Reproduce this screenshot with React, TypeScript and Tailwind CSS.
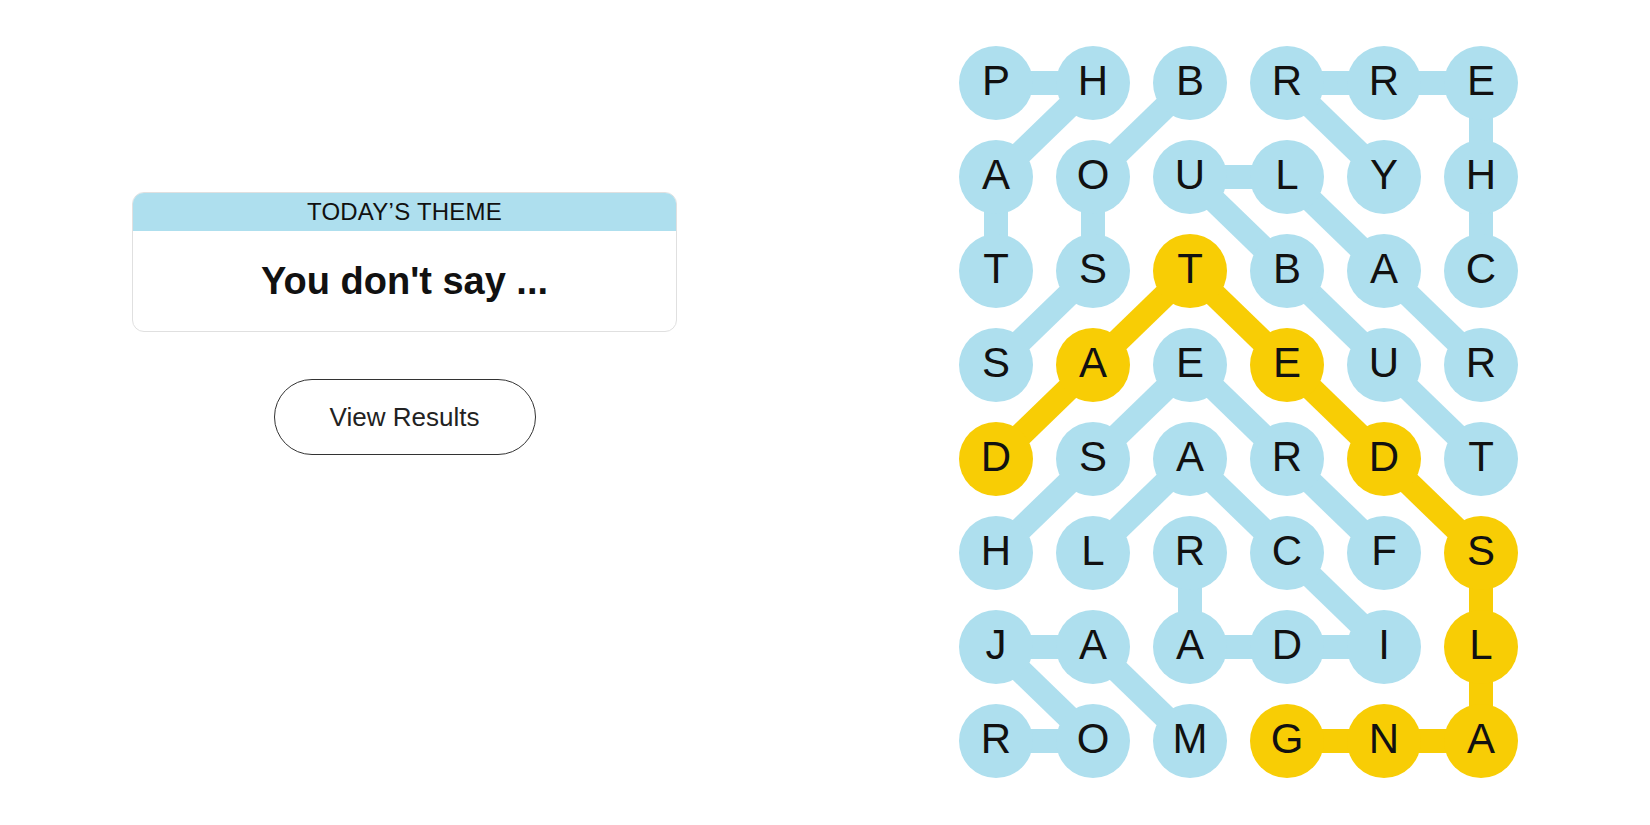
import React from "react";

const LETTERS = ["PHBRRE", "AOULYH", "TSTBAC", "SAEEUR", "DSARDT", "HLRCFS", "JAADIL", "ROMGNA"];

type P = [number, number];

const WORDS: { path: P[]; span?: boolean }[] = [
  { path: [[0, 0], [0, 1], [1, 0], [2, 0]] }, // PHAT
  { path: [[0, 2], [1, 1], [2, 1], [3, 0]] }, // BOSS
  { path: [[2, 5], [1, 5], [0, 5], [0, 4], [0, 3], [1, 4]] }, // CHERRY
  { path: [[4, 5], [3, 4], [2, 3], [1, 2], [1, 3], [2, 4], [3, 5]] }, // TUBULAR
  { path: [[5, 4], [4, 3], [3, 2], [4, 1], [5, 0]] }, // FRESH
  { path: [[5, 2], [6, 2], [6, 3], [6, 4], [5, 3], [4, 2], [5, 1]] }, // RADICAL
  { path: [[7, 2], [6, 1], [6, 0], [7, 1], [7, 0]] }, // MAJOR
  {
    path: [[4, 0], [3, 1], [2, 2], [3, 3], [4, 4], [5, 5], [6, 5], [7, 5], [7, 4], [7, 3]],
    span: true,
  }, // DATEDSLANG
];

const BLUE = "#aedfee";
const YELLOW = "#f8cd05";
const CELL = 74;
const GX = 97;
const GY = 94;

const spanSet = new Set<string>();
WORDS.filter((w) => w.span).forEach((w) => w.path.forEach(([r, c]) => spanSet.add(`${r}-${c}`)));

const cx = (c: number) => CELL / 2 + c * GX;
const cy = (r: number) => CELL / 2 + r * GY;

export default function App() {
  const W = CELL + 5 * GX;
  const H = CELL + 7 * GY;
  return (
    <div
      className="w-[1650px] h-[825px] bg-white flex justify-center gap-[282px] pt-[46px]"
      style={{ fontFamily: '"Liberation Sans", Arial, sans-serif' }}
    >
      <div className="w-[545px] pt-[146px] flex flex-col items-center">
        <div className="w-[545px] h-[140px] rounded-[12px] border border-[#e0e0e0] overflow-hidden flex flex-col">
          <div className="h-[38px] bg-[#aedfee] flex items-center justify-center text-[24px] leading-none text-[#111] tracking-[0.01em]">
            TODAY’S THEME
          </div>
          <div className="flex-1 flex items-center justify-center text-[38px] font-bold text-[#111] leading-none">
            You don't say ...
          </div>
        </div>
        <button className="mt-[47px] w-[262px] h-[76px] rounded-full border border-[#333] bg-white text-[26px] text-[#222] leading-none">
          View Results
        </button>
      </div>
      <div className="relative w-[559px] h-[732px]">
        <svg className="absolute inset-0" width={W} height={H} viewBox={`0 0 ${W} ${H}`}>
          {WORDS.map((w, i) =>
            w.path.slice(1).map(([r, c], j) => {
              const [pr, pc] = w.path[j];
              return (
                <line
                  key={`${i}-${j}`}
                  x1={cx(pc)}
                  y1={cy(pr)}
                  x2={cx(c)}
                  y2={cy(r)}
                  stroke={w.span ? YELLOW : BLUE}
                  strokeWidth={24}
                />
              );
            })
          )}
        </svg>
        <div className="relative grid grid-cols-[repeat(6,74px)] auto-rows-[74px] gap-x-[23px] gap-y-[20px]">
          {LETTERS.map((row, r) =>
            row.split("").map((ch, c) => {
              const isSpan = spanSet.has(`${r}-${c}`);
              return (
                <div
                  key={`${r}-${c}`}
                  className={
                    "w-[74px] h-[74px] rounded-full flex items-center justify-center pb-[4px] text-[42px] leading-none text-[#111] " +
                    (isSpan ? "bg-[#f8cd05]" : "bg-[#aedfee]")
                  }
                >
                  {ch}
                </div>
              );
            })
          )}
        </div>
      </div>
    </div>
  );
}
